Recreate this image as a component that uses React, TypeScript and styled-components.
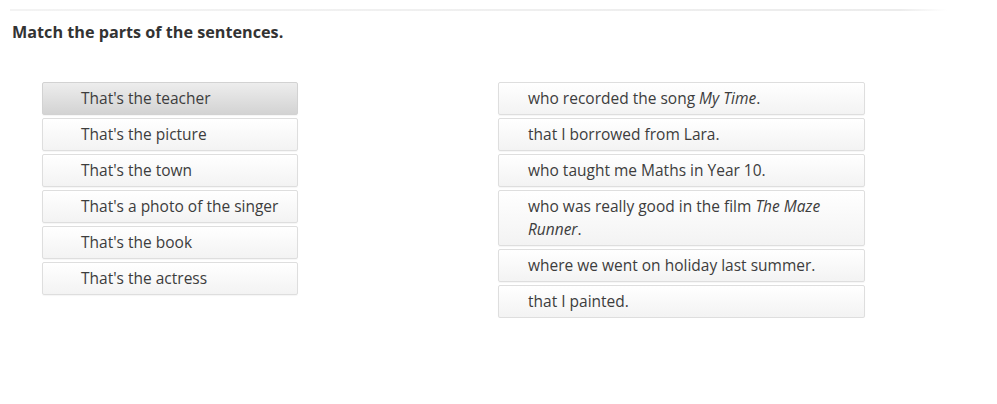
import styled, { createGlobalStyle } from "styled-components";

const GlobalStyle = createGlobalStyle`
  body {
    margin: 0;
    background: #fff;
    font-family: "Open Sans", "Noto Sans", sans-serif;
    color: #333;
  }
`;

const leftItems = [
  "That's the teacher",
  "That's the picture",
  "That's the town",
  "That's a photo of the singer",
  "That's the book",
  "That's the actress",
];

const rightItems = [
  <>who recorded the song <em>My Time</em>.</>,
  <>that I borrowed from Lara.</>,
  <>who taught me Maths in Year 10.</>,
  <>who was really good in the film <em>The Maze Runner</em>.</>,
  <>where we went on holiday last summer.</>,
  <>that I painted.</>,
];

const App = () => {
  return (
    <Page>
      <GlobalStyle />
      <Rule />
      <Title>Match the parts of the sentences.</Title>
      <Columns>
        <Column $width={256}>
          {leftItems.map((text, i) => (
            <Card key={text} $selected={i === 0} $pad={38}>
              {text}
            </Card>
          ))}
        </Column>
        <Column $width={367}>
          {rightItems.map((text, i) => (
            <Card key={i} $pad={29}>
              {text}
            </Card>
          ))}
        </Column>
      </Columns>
    </Page>
  );
};

const Page = styled.div`
  padding: 9px 50px 0 10px;
  width: 997px;
  box-sizing: border-box;
`;

const Rule = styled.div`
  height: 2px;
  background: linear-gradient(to right, #f3f3f3, #ececec 95%, rgba(236, 236, 236, 0));
`;

const Title = styled.h1`
  margin: 10px 0 0 2px;
  font-size: 16.2px;
  line-height: 22px;
  font-weight: 700;
  color: #333;
`;

const Columns = styled.div`
  display: flex;
  gap: 200px;
  margin: 39px 0 0 32px;
`;

const Column = styled.div<{ $width: number }>`
  display: flex;
  flex-direction: column;
  gap: 3px;
  width: ${(p) => p.$width}px;
`;

const Card = styled.div<{ $selected?: boolean; $pad: number }>`
  box-sizing: border-box;
  padding: 4px 10px 4px ${(p) => p.$pad}px;
  font-size: 15.5px;
  line-height: 23px;
  color: #3d3d3d;
  border: 1px solid ${(p) => (p.$selected ? "#d2d2d2" : "#dedede")};
  border-radius: 2px;
  background: ${(p) =>
    p.$selected
      ? "linear-gradient(#ededed, #d3d3d3)"
      : "linear-gradient(#ffffff, #f3f3f3)"};
  box-shadow: 0 1px 1px rgba(0, 0, 0, 0.04);

  em {
    font-style: italic;
  }
`;

export default App;
